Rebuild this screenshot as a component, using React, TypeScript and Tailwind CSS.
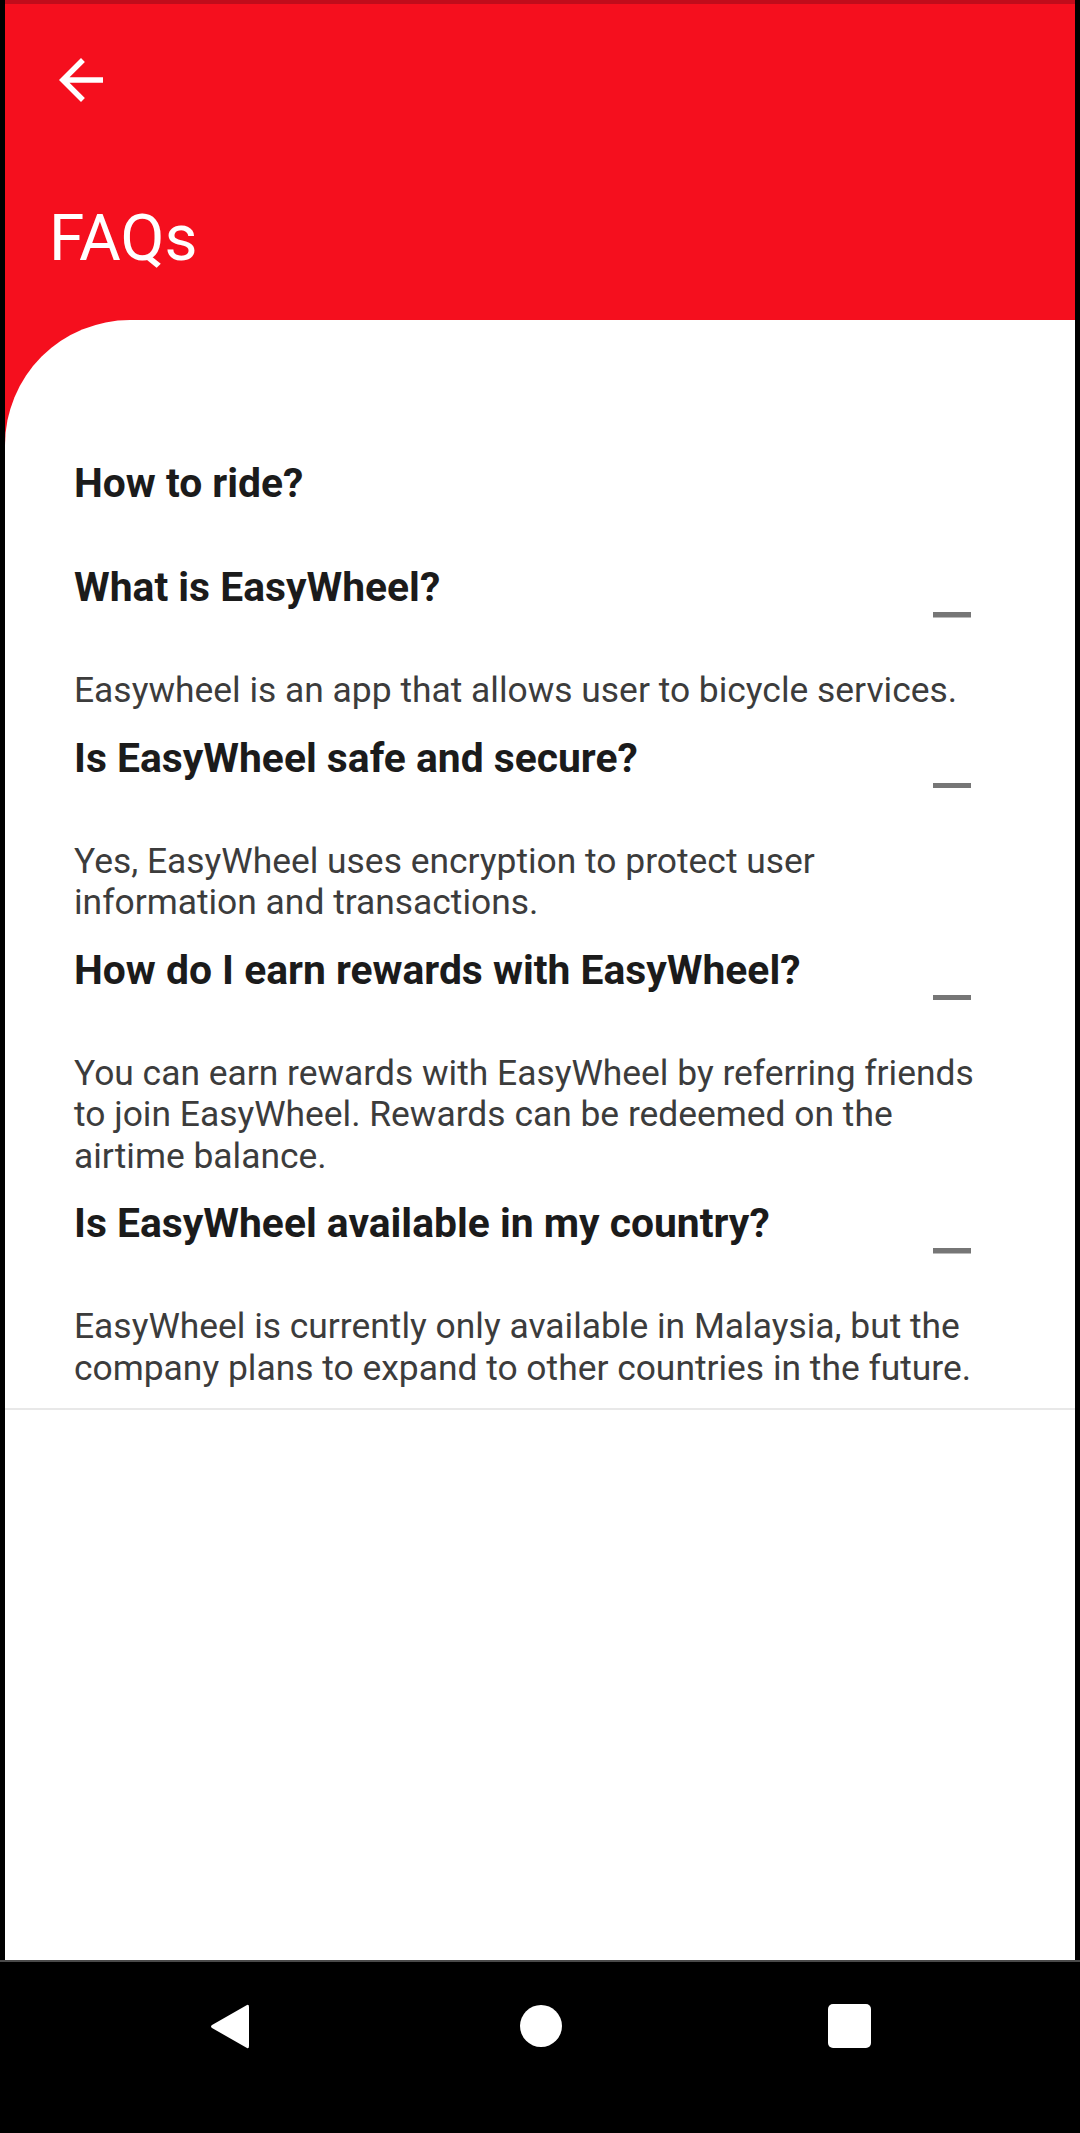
import React from 'react';

const faqs = [
  { q: 'What is EasyWheel?', a: 'Easywheel is an app that allows user to bicycle services.' },
  { q: 'Is EasyWheel safe and secure?', a: 'Yes, EasyWheel uses encryption to protect user information and transactions.' },
  {
    q: 'How do I earn rewards with EasyWheel?',
    a: 'You can earn rewards with EasyWheel by referring friends to join EasyWheel. Rewards can be redeemed on the airtime balance.',
  },
  {
    q: 'Is EasyWheel available in my country?',
    a: 'EasyWheel is currently only available in Malaysia, but the company plans to expand to other countries in the future.',
  },
];

const BackArrow = () => (
  <svg width="66" height="66" viewBox="0 0 24 24" fill="#ffffff">
    <path d="M20 11H7.83l5.59-5.59L12 4l-8 8 8 8 1.41-1.41L7.83 13H20v-2z" />
  </svg>
);

const RemoveIcon = () => (
  <svg width="38.5" height="5.5" viewBox="5 11 14 2" fill="#767676">
    <path d="M19 13H5v-2h14v2z" />
  </svg>
);

const FaqItem = ({ q, a }: { q: string; a: string }) => (
  <div>
    <h3 className="text-[40.8px] leading-[44px] font-bold text-[#1b1b1b]">{q}</h3>
    <div className="flex justify-end pr-[15px] mt-[3px] h-[6px]">
      <RemoveIcon />
    </div>
    <p className="mt-[52px] text-[35.4px] leading-[41.5px] text-[#3c3c3c]">{a}</p>
  </div>
);

export default function App() {
  return (
    <div className="w-[1080px] h-[2133px] bg-black flex flex-col font-['Roboto',sans-serif]">
      <div className="flex-1 flex flex-col mx-[5px]">
        {/* status strip */}
        <div className="h-[4px] bg-[#c00c1b]" />

        <div className="flex-1 flex flex-col bg-[#f50f1e]">
          {/* app bar */}
          <div className="pt-[43px] pl-[43px]">
            <BackArrow />
          </div>
          <h1 className="mt-[88px] mb-[44px] pl-[44px] text-[64px] leading-[75px] text-white">FAQs</h1>

          {/* content card */}
          <div className="flex-1 bg-white rounded-tl-[125px] pt-[141px]">
            <div className="pl-[69px] pr-[89px]">
              <h3 className="text-[40.8px] leading-[44px] font-bold text-[#1b1b1b]">How to ride?</h3>
              <div className="mt-[60px] flex flex-col gap-[24px]">
                {faqs.map((f) => (
                  <FaqItem key={f.q} q={f.q} a={f.a} />
                ))}
              </div>
            </div>
            <div className="mt-[19px] h-[2px] bg-[#e8e8e8]" />
          </div>
        </div>
      </div>

      {/* navigation bar */}
      <div className="h-[173px] bg-black border-t-2 border-[#4a4a4a] flex items-start pt-[41px]">
        <div className="w-[210px]" />
        <svg width="40" height="47" viewBox="0 0 40 47" fill="#ffffff">
          <path d="M37 2 Q39 1 39 4 L39 43 Q39 46 37 45 L2 25 Q0 23.5 2 22 Z" />
        </svg>
        <div className="w-[270px]" />
        <div className="mt-[2px] w-[42px] h-[42px] rounded-full bg-white" />
        <div className="w-[266px]" />
        <div className="mt-[1px] w-[43px] h-[44px] rounded-[5px] bg-white" />
      </div>
    </div>
  );
}
